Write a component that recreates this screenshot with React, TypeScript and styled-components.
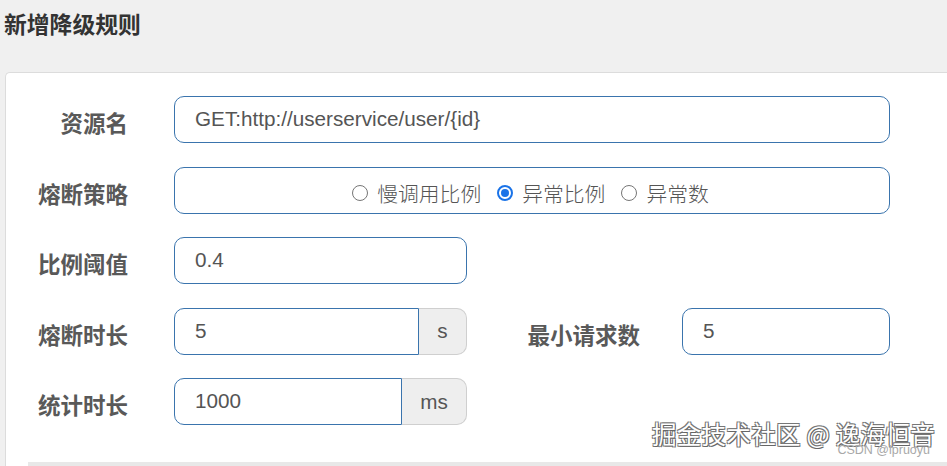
import React from 'react';
import styled, { createGlobalStyle } from 'styled-components';

const GlobalStyle = createGlobalStyle`
    html, body {
        margin: 0;
        padding: 0;
        background: #f0f0f0;
        font-family: "Liberation Sans", Arial, "Noto Sans CJK SC", sans-serif;
    }
    body {
        width: 947px;
        height: 466px;
        overflow: hidden;
    }
`;

const Page = styled.div`
    position: relative;
    width: 947px;
    height: 466px;
    overflow: hidden;
`;

const Title = styled.h4`
    margin: 0 0 22px 0;
    padding: 10px 4px;
    line-height: 30px;
    font-size: 22.8px;
    font-weight: bold;
    color: #333;
`;

const Panel = styled.div`
    margin-left: 5px;
    background: #fff;
    border: 1px solid #dcdcdc;
    border-right: none;
    border-bottom: none;
    border-radius: 5px 0 0 0;
    padding-top: 23px;
    height: 400px;
    box-sizing: border-box;
`;

const Form = styled.div`
    display: flex;
    flex-direction: column;
    gap: 23.5px;
`;

const Row = styled.div`
    display: flex;
    align-items: center;
    height: 47px;
`;

const Label = styled.label<{ $width?: number; $gap?: number }>`
    width: ${p => p.$width ?? 122}px;
    margin-right: ${p => p.$gap ?? 46}px;
    padding-top: 5px;
    text-align: right;
    font-size: 22.5px;
    font-weight: bold;
    color: #595959;
    box-sizing: border-box;
    flex-shrink: 0;
`;

const Field = styled.div<{ $width: number }>`
    display: flex;
    width: ${p => p.$width}px;
    height: 47px;
    flex-shrink: 0;
`;

const TextBox = styled.div<{ $joined?: boolean }>`
    flex: 1;
    display: flex;
    align-items: center;
    padding-left: 20px;
    padding-bottom: 1px;
    border: 1px solid #3a74ad;
    border-radius: ${p => (p.$joined ? '10px 0 0 10px' : '10px')};
    font-size: 20.7px;
    color: #555;
    box-sizing: border-box;
    white-space: nowrap;
    overflow: hidden;
`;

const Addon = styled.div<{ $width: number }>`
    width: ${p => p.$width}px;
    display: flex;
    align-items: center;
    justify-content: center;
    background: #eee;
    border: 1px solid #cfcfcf;
    border-left: none;
    border-radius: 0 10px 10px 0;
    font-size: 20.7px;
    color: #555;
    box-sizing: border-box;
`;

const RadioBox = styled.div`
    flex: 1;
    display: flex;
    align-items: center;
    justify-content: center;
    padding-top: 5px;
    padding-right: 3px;
    border: 1px solid #3a74ad;
    border-radius: 10px;
    box-sizing: border-box;
`;

const RadioItem = styled.span`
    display: inline-flex;
    align-items: center;
    margin: 0 8px;
    font-size: 20.8px;
    color: #555;
    font-family: "Noto Sans CJK SC", sans-serif;
    font-weight: 300;
`;

const Dot = styled.span<{ $checked?: boolean }>`
    position: relative;
    display: inline-block;
    width: 16px;
    height: 16px;
    margin-right: 9px;
    border-radius: 50%;
    box-sizing: border-box;
    border: ${p => (p.$checked ? '2px solid #1a73e8' : '1.5px solid #767676')};
    &::after {
        content: '';
        display: ${p => (p.$checked ? 'block' : 'none')};
        position: absolute;
        left: 2px;
        top: 2px;
        width: 8px;
        height: 8px;
        border-radius: 50%;
        background: #1a73e8;
    }
`;

const Footer = styled.div`
    margin: 37px 0 0 22px;
    border-top: 4px solid #e8e8e8;
`;

const Watermark = styled.div`
    position: absolute;
    right: 12px;
    bottom: 15px;
    font-family: "Noto Sans CJK SC", sans-serif;
    font-size: 24.5px;
    color: #fff;
    letter-spacing: 0.3px;
    text-shadow: 1px 1px 0 #666, -1px -1px 0 #777, 1px -1px 0 #777, -1px 1px 0 #777;
`;

const Credit = styled.div`
    position: absolute;
    right: 17px;
    bottom: 9px;
    font-size: 12.5px;
    color: #a8a8a8;
`;

const App = () => {
    return (
        <Page>
            <GlobalStyle />
            <Title>新增降级规则</Title>
            <Panel>
                <Form>
                    <Row>
                        <Label>资源名</Label>
                        <Field $width={716}>
                            <TextBox>GET:http://userservice/user/{'{id}'}</TextBox>
                        </Field>
                    </Row>
                    <Row>
                        <Label>熔断策略</Label>
                        <Field $width={716}>
                            <RadioBox>
                                <RadioItem><Dot />慢调用比例</RadioItem>
                                <RadioItem><Dot $checked />异常比例</RadioItem>
                                <RadioItem><Dot />异常数</RadioItem>
                            </RadioBox>
                        </Field>
                    </Row>
                    <Row>
                        <Label>比例阈值</Label>
                        <Field $width={293}>
                            <TextBox>0.4</TextBox>
                        </Field>
                    </Row>
                    <Row>
                        <Label>熔断时长</Label>
                        <Field $width={293}>
                            <TextBox $joined>5</TextBox>
                            <Addon $width={48}>s</Addon>
                        </Field>
                        <Label $width={173} $gap={42}>最小请求数</Label>
                        <Field $width={208}>
                            <TextBox>5</TextBox>
                        </Field>
                    </Row>
                    <Row>
                        <Label>统计时长</Label>
                        <Field $width={293}>
                            <TextBox $joined>1000</TextBox>
                            <Addon $width={65}>ms</Addon>
                        </Field>
                    </Row>
                </Form>
                <Footer />
            </Panel>
            <Watermark>掘金技术社区 @ 逸海恒音</Watermark>
            <Credit>CSDN @lpruoyu</Credit>
        </Page>
    );
};

export default App;
